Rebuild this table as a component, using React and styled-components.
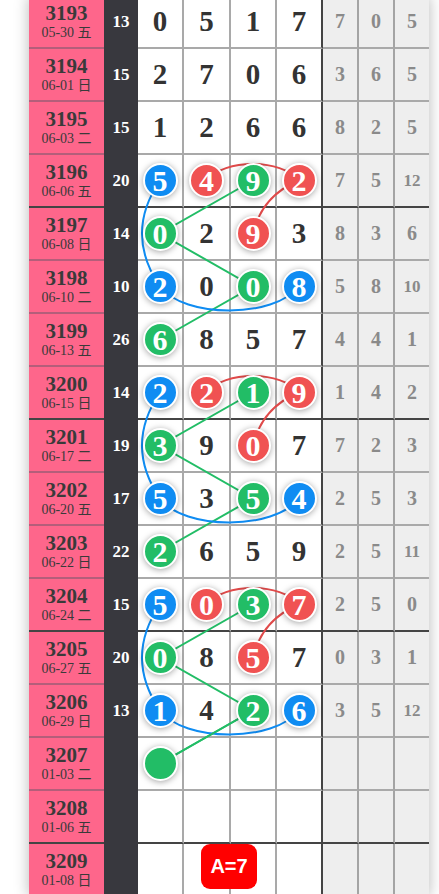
import React from 'react';
import styled, { createGlobalStyle } from 'styled-components';

const GlobalStyle = createGlobalStyle`
  html, body {
    margin: 0;
    padding: 0;
    background: #fff;
    overflow: hidden;
  }
`;

const rows = [
  { id: 3193, date: '05-30 五', sum: 13, nums: ['0', '5', '1', '7'], spans: [7, 0, 5] },
  { id: 3194, date: '06-01 日', sum: 15, nums: ['2', '7', '0', '6'], spans: [3, 6, 5] },
  { id: 3195, date: '06-03 二', sum: 15, nums: ['1', '2', '6', '6'], spans: [8, 2, 5] },
  { id: 3196, date: '06-06 五', sum: 20, nums: ['b5', 'r4', 'g9', 'r2'], spans: [7, 5, 12] },
  { id: 3197, date: '06-08 日', sum: 14, nums: ['g0', '2', 'r9', '3'], spans: [8, 3, 6] },
  { id: 3198, date: '06-10 二', sum: 10, nums: ['b2', '0', 'g0', 'b8'], spans: [5, 8, 10] },
  { id: 3199, date: '06-13 五', sum: 26, nums: ['g6', '8', '5', '7'], spans: [4, 4, 1] },
  { id: 3200, date: '06-15 日', sum: 14, nums: ['b2', 'r2', 'g1', 'r9'], spans: [1, 4, 2] },
  { id: 3201, date: '06-17 二', sum: 19, nums: ['g3', '9', 'r0', '7'], spans: [7, 2, 3] },
  { id: 3202, date: '06-20 五', sum: 17, nums: ['b5', '3', 'g5', 'b4'], spans: [2, 5, 3] },
  { id: 3203, date: '06-22 日', sum: 22, nums: ['g2', '6', '5', '9'], spans: [2, 5, 11] },
  { id: 3204, date: '06-24 二', sum: 15, nums: ['b5', 'r0', 'g3', 'r7'], spans: [2, 5, 0] },
  { id: 3205, date: '06-27 五', sum: 20, nums: ['g0', '8', 'r5', '7'], spans: [0, 3, 1] },
  { id: 3206, date: '06-29 日', sum: 13, nums: ['b1', '4', 'g2', 'b6'], spans: [3, 5, 12] },
  { id: 3207, date: '01-03 二', sum: '', nums: ['g', '', '', ''], spans: ['', '', ''] },
  { id: 3208, date: '01-06 五', sum: '', nums: ['', '', '', ''], spans: ['', '', ''] },
  { id: 3209, date: '01-08 日', sum: '', nums: ['', '', '', ''], spans: ['', '', ''] },
];

const ballColors = { b: '#0f8cf2', r: '#f05252', g: '#22bd66' };

const ROW_H = 53;
const COL_X = [131, 177.5, 224, 270];
const rowY = (i) => ROW_H * i + 25.5;

const Table = styled.div`
  position: relative;
  isolation: isolate;
  width: 400px;
  margin: -4px 0 0 29px;
  box-shadow: 0 0 14px rgba(0, 0, 0, 0.28);
  font-family: 'Liberation Serif', 'Noto Sans CJK SC', serif;
`;

const Row = styled.div`
  display: grid;
  grid-template-columns: 75px 34px 46px 47px 46px 46px 36px 36px 34px;
  height: ${ROW_H}px;
`;

const Cell = styled.div`
  box-sizing: border-box;
  display: flex;
  align-items: center;
  justify-content: center;
  border-bottom: 2px solid ${({ $thick }) => ($thick ? '#444' : '#a9a9a9')};
`;

const PeriodCell = styled(Cell)`
  flex-direction: column;
  background: #fe668b;
  color: #3a3a3a;
  border-bottom-color: ${({ $thick }) => ($thick ? '#444' : '#b45e7a')};

  strong {
    font-size: 21px;
    line-height: 22px;
  }

  span {
    font-size: 14px;
    line-height: 17px;
  }
`;

const SumCell = styled(Cell)`
  background: #38383e;
  border-bottom-color: #38383e;
  color: #fff;
  font-size: 17px;
  font-weight: bold;
`;

const NumCell = styled(Cell)`
  position: relative;
  background: #fff;
  border-right: 2px solid ${({ $edge }) => ($edge ? '#444' : '#a9a9a9')};
  color: #333;
  font-size: 29px;
  font-weight: bold;
`;

const SpanCell = styled(Cell)`
  background: #eee;
  border-right: ${({ $last }) => ($last ? 'none' : '2px solid #a4a4a4')};
  color: #8a8a8a;
  font-size: ${({ $small }) => ($small ? '17px' : '20px')};
  font-weight: bold;
`;

const Ball = styled.div`
  position: relative;
  z-index: 2;
  box-sizing: border-box;
  width: 35px;
  height: 35px;
  border: 2px solid #fff;
  border-radius: 50%;
  background: ${({ $color }) => $color};
  box-shadow: 0 1px 6px rgba(0, 0, 0, 0.35);
  display: flex;
  align-items: center;
  justify-content: center;
  color: #fff;
  font-size: 30px;
  font-weight: bold;
  line-height: 1;
`;

const Lines = styled.svg`
  position: absolute;
  top: 0;
  left: 0;
  z-index: 1;
  pointer-events: none;
`;

const Badge = styled.div`
  position: absolute;
  z-index: 3;
  left: 172px;
  top: ${ROW_H * 16}px;
  width: 56px;
  height: 45px;
  border-radius: 9px;
  background: #ff0000;
  color: #fff;
  display: flex;
  align-items: center;
  justify-content: center;
  font-family: 'Liberation Sans', Arial, sans-serif;
  font-size: 20px;
  font-weight: bold;
`;

const groupPaths = (g) => {
  const [x0, x1, x2, x3] = COL_X;
  const y0 = rowY(g);
  const y1 = rowY(g + 1);
  const y2 = rowY(g + 2);
  const y3 = rowY(g + 3);
  return {
    red: [
      `M${x1},${y0} C${x1 + 18},${y0 - 22} ${x3 - 18},${y0 - 22} ${x3},${y0}`,
      `M${x3},${y0} Q${x2 + 9},${y0 + 15} ${x2},${y1}`,
    ],
    green: [`M${x2},${y0} L${x0},${y1} L${x2},${y2} L${x0},${y3}`],
    blue: [
      `M${x0},${y0} Q${x0 - 36},${(y0 + y2) / 2} ${x0},${y2}`,
      `M${x0},${y2} C${x0 + 24},${y2 + 32} ${x3 - 25},${y2 + 32} ${x3},${y2}`,
    ],
  };
};

const Connections = () => {
  const groups = [3, 7, 11].map(groupPaths);
  return (
    <Lines width="400" height={ROW_H * rows.length} fill="none" strokeWidth="2">
      {groups.map((p, i) => (
        <g key={i}>
          {p.red.map((d) => <path key={d} d={d} stroke="#e04a4a" />)}
          {p.green.map((d) => <path key={d} d={d} stroke="#22bd66" />)}
          {p.blue.map((d) => <path key={d} d={d} stroke="#0f8cf2" />)}
        </g>
      ))}
      <path d={`M${COL_X[2]},${rowY(13)} L${COL_X[0]},${rowY(14)}`} stroke="#22bd66" />
    </Lines>
  );
};

const renderNum = (token) => {
  if (!token) return null;
  const color = ballColors[token[0]];
  if (color) return <Ball $color={color}>{token.slice(1)}</Ball>;
  return token;
};

const App = () => (
  <>
    <GlobalStyle />
    <Table>
      {rows.map((row, i) => {
        const thick = (i - 3) % 4 === 0 && i >= 3;
        return (
          <Row key={row.id}>
            <PeriodCell $thick={thick}>
              <strong>{row.id}</strong>
              <span>{row.date}</span>
            </PeriodCell>
            <SumCell $thick={thick}>{row.sum}</SumCell>
            {row.nums.map((n, j) => (
              <NumCell key={j} $thick={thick} $edge={j === 3}>
                {renderNum(n)}
              </NumCell>
            ))}
            {row.spans.map((s, j) => (
              <SpanCell key={j} $thick={thick} $last={j === 2} $small={String(s).length > 1}>
                {s}
              </SpanCell>
            ))}
          </Row>
        );
      })}
      <Connections />
      <Badge>A=7</Badge>
    </Table>
  </>
);

export default App;
